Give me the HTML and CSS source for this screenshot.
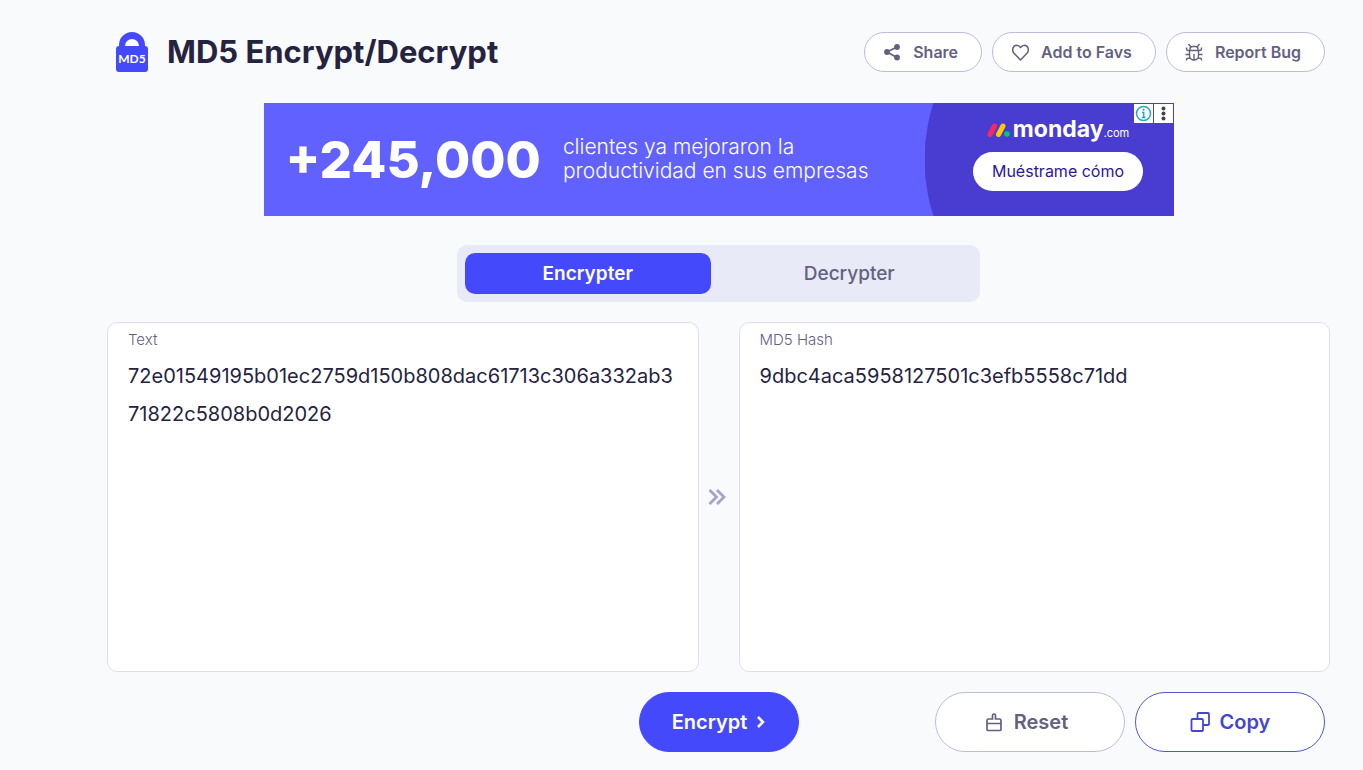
FILE: index.html
```
<!DOCTYPE html>
<html lang="en">
<head>
<meta charset="utf-8">
<title>MD5 Encrypt/Decrypt</title>
<link rel="stylesheet" href="styles.css">
</head>
<body>
<main class="page">
  <header class="header">
    <svg class="logo" viewBox="0 0 34 40" aria-hidden="true">
      <path d="M4 16v-3a13 13 0 0 1 26 0v3h-6v-2a7 7 0 0 0-14 0v2z" fill="#4549fc"/>
      <rect x="1" y="14" width="32" height="26" rx="3" fill="#4549fc"/>
      <text class="logo-text" x="17" y="31" text-anchor="middle">MD5</text>
    </svg>
    <h1 class="title">MD5 Encrypt/Decrypt</h1>
    <div class="actions">
      <button class="pill" type="button">
        <svg class="icon" viewBox="0 0 18 18" fill="currentColor"><circle cx="4" cy="9" r="2.900"/><circle cx="14" cy="4" r="2.900"/><circle cx="14" cy="14.500" r="2.900"/><path d="M14 4L4 9l10 5.500" fill="none" stroke="currentColor" stroke-width="1.800"/></svg>
        Share
      </button>
      <button class="pill" type="button">
        <svg class="icon" viewBox="0 0 18 18" fill="none" stroke="currentColor" stroke-width="1.500"><path d="M9.500 17L2.800 10C.8 7.500 1.500 2.500 5.500 2.300 7.500 2.300 8.800 3.500 9.500 4.500 10.200 3.500 11.500 2.300 13.500 2.300 17.500 2.500 18.200 7.500 16.200 10z" stroke-linejoin="round"/></svg>
        Add to Favs
      </button>
      <button class="pill" type="button">
        <svg class="icon" viewBox="0 0 18 18" fill="none" stroke="currentColor" stroke-width="1.400"><path d="M4.500 7.500h9v5a4.500 4.500 0 0 1-9 0zM5 7.500V6q0-2.500 2.500-2.500h3Q13 3.500 13 6v1.500M9 11v6M3.500 1L6 4M14.500 1L12 4M1.500 4.500v1q0 2 2 2h11q2 0 2-2v-1M.500 11.500h4M13.500 11.500h4M1.500 17.500v-1q0-1.500 3.500-1.500M16.500 17.500v-1q0-1.500-3.500-1.500"/></svg>
        Report Bug
      </button>
    </div>
  </header>

  <aside class="ad" aria-label="Advertisement">
    <strong class="ad-number">+245,000</strong>
    <p class="ad-copy">clientes ya mejoraron la<br>productividad en sus empresas</p>
    <div class="ad-side">
      <div class="brand">
        <svg class="brand-mark" viewBox="0 0 23 14"><path d="M3 11.500L7.500 3" stroke="#fb275d" stroke-width="5" stroke-linecap="round"/><path d="M11.500 11.500L16 3" stroke="#ffcb00" stroke-width="5" stroke-linecap="round"/><circle cx="20" cy="11" r="2.800" fill="#00ca72"/></svg>
        <span class="brand-name">monday</span><span class="brand-suffix">.com</span>
      </div>
      <a class="ad-link" href="#">Muéstrame cómo</a>
    </div>
    <div class="ad-controls">
      <button class="ad-control" type="button" aria-label="Ad information"><svg viewBox="0 0 19 19" fill="none" stroke="#22a9be" stroke-width="1.500"><circle cx="9.500" cy="9.500" r="7"/><path d="M8 8.500h1.700v5M7.800 13.500h3.800"/><path d="M8.700 5.800h1.800" stroke-width="2"/></svg></button>
      <button class="ad-control" type="button" aria-label="Ad options"><svg viewBox="0 0 19 19" fill="#444"><circle cx="9.500" cy="4.500" r="2"/><circle cx="9.500" cy="9.500" r="2"/><circle cx="9.500" cy="14.500" r="2"/></svg></button>
    </div>
  </aside>

  <nav class="tabs" aria-label="Mode">
    <button class="tab tab-active" type="button">Encrypter</button>
    <button class="tab" type="button">Decrypter</button>
  </nav>

  <section class="panels">
    <div class="panel">
      <label class="panel-label" for="source">Text</label>
      <textarea class="panel-text" id="source" spellcheck="false">72e01549195b01ec2759d150b808dac61713c306a332ab371822c5808b0d2026</textarea>
    </div>
    <svg class="arrows" viewBox="0 0 18 16" fill="none" stroke="#a3a3cb" stroke-width="2.800"><path d="M1.500 1l7 7-7 7M9 1l7 7-7 7"/></svg>
    <div class="panel">
      <label class="panel-label" for="hash">MD5 Hash</label>
      <textarea class="panel-text" id="hash" spellcheck="false" readonly>9dbc4aca5958127501c3efb5558c71dd</textarea>
    </div>
  </section>

  <footer class="footer">
    <button class="button button-primary" type="button">Encrypt
      <svg class="chevron" viewBox="0 0 8 12" fill="none" stroke="currentColor" stroke-width="2.500"><path d="M1 1l5 5-5 5"/></svg>
    </button>
    <div class="footer-end">
      <button class="button button-plain" type="button">
        <svg class="icon-large" viewBox="0 0 20 20" fill="none" stroke="currentColor" stroke-width="1.700"><path d="M3 17.500v-9q0-1.500 1.500-1.500H8.500V3.500q0-1.500 1.500-1.500t1.500 1.500V7h4q1.500 0 1.500 1.500v9q0 1-1 1H4q-1 0-1-1zM3 11.500h14"/></svg>
        Reset
      </button>
      <button class="button button-outline" type="button">
        <svg class="icon-large" viewBox="0 0 20 20" fill="none" stroke="currentColor" stroke-width="1.800"><rect x="1.500" y="7" width="11.500" height="12" rx="1"/><path d="M7.500 7V2q0-1 1-1h9.500q1 0 1 1v10q0 1-1 1h-5"/></svg>
        Copy
      </button>
    </div>
  </footer>
</main>
</body>
</html>
```
FILE: styles.css
```
* { box-sizing: border-box; }
body {
  margin: 0;
  background: #f8fafc;
  color: #25233f;
  font-family: Inter, "Liberation Sans", sans-serif;
}
button { font: inherit; cursor: pointer; }
svg { display: block; flex: none; }
.page {
  display: flex;
  flex-direction: column;
  padding: 32px 33px 18px 107px;
}
.header {
  display: flex;
  align-items: center;
  padding: 0 5px 0 8px;
}
.logo { width: 34px; height: 40px; }
.logo-text { font: 700 12px Lato, sans-serif; fill: #fff; }
.title {
  margin: 0 0 0 18px;
  font-size: 31px;
  line-height: 40px;
  font-weight: 700;
}
.actions { display: flex; gap: 10px; margin-left: auto; }
.pill {
  display: flex;
  align-items: center;
  gap: 12px;
  height: 40px;
  padding: 0 23px 0 18px;
  border: 1px solid #bdbdd9;
  border-radius: 20px;
  background: #fff;
  color: #64617f;
  font-size: 16px;
  font-weight: 600;
}
.icon { width: 18px; height: 18px; }
.icon-large { width: 20px; height: 20px; }
.ad {
  position: relative;
  display: flex;
  align-items: center;
  align-self: center;
  width: 100%;
  max-width: 910px;
  height: 113px;
  margin-top: 31px;
  padding-left: 22px;
  background: #6161ff;
  color: #fff;
}
.ad-number { font-size: 51px; line-height: 64px; font-weight: 800; }
.ad-copy { margin: 0 0 0 22px; font-size: 21px; line-height: 24px; font-weight: 300; color: #fff; padding-bottom: 2px; }
.ad-side {
  display: flex;
  flex-direction: column;
  align-items: center;
  width: 249px;
  height: 100%;
  margin-left: auto;
  padding: 12px 0 0 18px;
  background: #493dd1;
  clip-path: circle(182px at 182px 50%);
}
.brand { display: flex; align-items: baseline; height: 37px; }
.brand-mark { width: 23px; height: 14px; margin-right: 3px; }
.brand-name { font-size: 23px; line-height: 28px; font-weight: 700; }
.brand-suffix { font-size: 11px; }
.ad-link {
  width: 170px;
  border-radius: 20px;
  background: #fff;
  color: #2b169b;
  font-size: 16px;
  line-height: 39px;
  text-align: center;
  text-decoration: none;
}
.ad-controls { position: absolute; top: 1px; right: 1px; display: flex; gap: 1px; }
.ad-control { width: 19px; height: 19px; padding: 0; border: 0; background: #fff; }
.tabs {
  display: grid;
  grid-template-columns: 1fr 1fr;
  gap: 16px;
  align-self: center;
  width: 100%;
  max-width: 523px;
  margin-top: 29px;
  padding: 8px;
  border-radius: 10px;
  background: #e8eaf8;
}
.tab {
  height: 41px;
  padding: 0;
  border: 0;
  border-radius: 10px;
  background: none;
  color: #64617f;
  font-size: 19px;
  font-weight: 500;
}
.tab-active { background: #4549fc; color: #fff; font-weight: 600; }
.panels {
  display: grid;
  grid-template-columns: 1fr 40px 1fr;
  align-items: center;
  margin-top: 20px;
}
.panel {
  display: flex;
  flex-direction: column;
  height: 350px;
  padding: 6px 20px 12px;
  border: 1px solid #dedfec;
  border-radius: 10px;
  background: #fff;
}
.panel-label { font-size: 15px; line-height: 22px; font-weight: 300; color: #64617f; }
.panel-text {
  flex: 1;
  width: 100%;
  margin-top: 6px;
  padding: 0;
  border: 0;
  outline: 0;
  resize: none;
  background: none;
  color: #25233f;
  font: 400 20px/38px Inter, "Liberation Sans", sans-serif;
  word-break: break-all;
}
.arrows { width: 18px; height: 16px; margin-left: 9px; }
.footer {
  display: grid;
  grid-template-columns: 1fr auto 1fr;
  align-items: center;
  margin-top: 20px;
}
.footer-end { display: flex; justify-content: flex-end; gap: 10px; padding-right: 5px; }
.button {
  display: flex;
  align-items: center;
  justify-content: center;
  gap: 10px;
  width: 190px;
  height: 60px;
  padding: 0;
  border: 1px solid #bdbdd9;
  border-radius: 30px;
  background: #fff;
  color: #64617f;
  font-size: 20px;
  font-weight: 600;
}
.button-primary {
  grid-column: 2;
  width: 160px;
  border-color: #4549fc;
  background: #4549fc;
  color: #fff;
}
.button-plain { padding-right: 8px; }
.button-outline { border-color: #5555cc; color: #4545d5; }
.chevron { width: 8px; height: 12px; }
```
